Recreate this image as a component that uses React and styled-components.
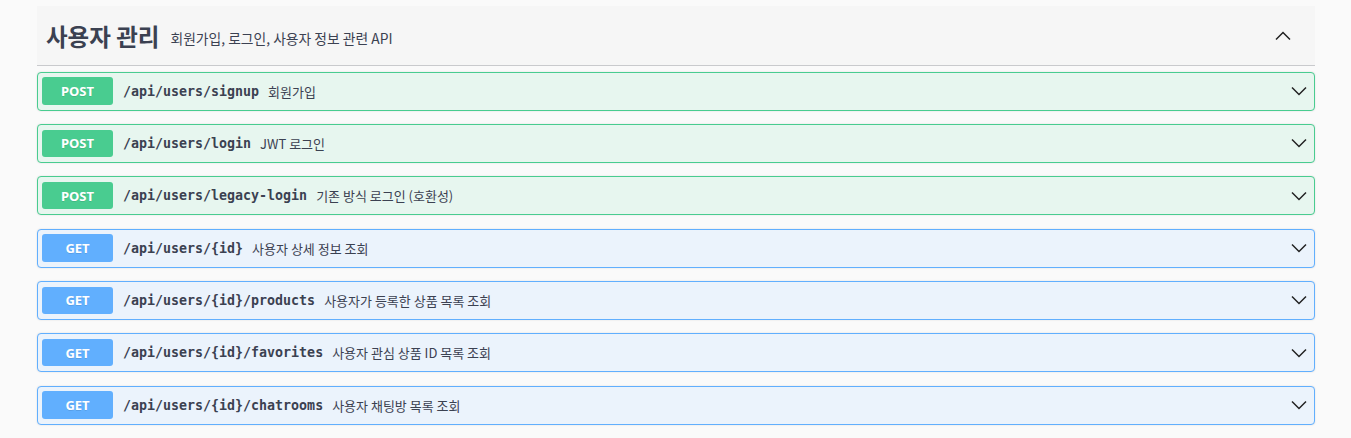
import React from "react";
import styled, { createGlobalStyle } from "styled-components";

const Global = createGlobalStyle`
  html, body { margin: 0; padding: 0; background: #fafafa; }
  body { font-family: "Noto Sans CJK KR", "Noto Sans", sans-serif; color: #3b4151; }
`;

const Page = styled.div`
  padding: 6px 36px 0 37px;
`;

const TagHeader = styled.div`
  display: flex;
  align-items: center;
  height: 60px;
  box-sizing: border-box;
  padding: 0 24px 0 9px;
  background: #f6f6f6;
  border-bottom: 1px solid #c9cacd;
`;

const TagTitle = styled.h3`
  margin: 0 11px 0 0;
  font-family: "Noto Sans CJK KR", sans-serif;
  font-size: 23.5px;
  font-weight: 700;
  color: #3b4151;
  line-height: 1;
  position: relative;
  top: 1px;
`;

const TagDesc = styled.small`
  flex: 1;
  font-family: "Noto Sans CJK KR", sans-serif;
  font-size: 13.8px;
  color: #3b4151;
  position: relative;
  top: 2px;
`;

const List = styled.div`
  padding-top: 5.5px;
`;

const themes = {
  POST: { border: "#49cc90", bg: "#e7f6ef", badge: "#49cc90" },
  GET: { border: "#61affe", bg: "#ebf3fc", badge: "#61affe" },
};

const Opblock = styled.div`
  display: flex;
  align-items: center;
  height: 39px;
  box-sizing: border-box;
  margin-bottom: 13.35px;
  padding: 0 7px 0 4px;
  border: 1px solid ${(p) => themes[p.$method].border};
  border-radius: 4px;
  background: ${(p) => themes[p.$method].bg};
  box-shadow: 0 0 2px rgba(0, 0, 0, 0.12);
`;

const Method = styled.span`
  display: flex;
  align-items: center;
  justify-content: center;
  width: 71px;
  height: 27.5px;
  flex-shrink: 0;
  border-radius: 3px;
  background: ${(p) => themes[p.$method].badge};
  color: #fff;
  font-family: "Noto Sans", sans-serif;
  font-size: 13px;
  font-weight: 700;
  text-shadow: 0 1px 0 rgba(0, 0, 0, 0.1);
`;

const Path = styled.span`
  margin-left: 10px;
  font-family: "DejaVu Sans Mono", monospace;
  font-size: 13.3px;
  font-weight: 700;
  color: #3b4151;
`;

const Desc = styled.span`
  flex: 1;
  margin-left: 9px;
  font-family: "Noto Sans CJK KR", sans-serif;
  font-size: 13px;
  color: #3b4151;
`;

const Chevron = ({ up }) => (
  <svg width="16" height="10" viewBox="0 0 16 10" fill="none">
    <polyline
      points={up ? "1,8.5 8,1.5 15,8.5" : "1,1.5 8,8.5 15,1.5"}
      stroke="#222"
      strokeWidth="1.5"
    />
  </svg>
);

const ops = [
  ["POST", "/api/users/signup", "회원가입"],
  ["POST", "/api/users/login", "JWT 로그인"],
  ["POST", "/api/users/legacy-login", "기존 방식 로그인 (호환성)"],
  ["GET", "/api/users/{id}", "사용자 상세 정보 조회"],
  ["GET", "/api/users/{id}/products", "사용자가 등록한 상품 목록 조회"],
  ["GET", "/api/users/{id}/favorites", "사용자 관심 상품 ID 목록 조회"],
  ["GET", "/api/users/{id}/chatrooms", "사용자 채팅방 목록 조회"],
];

export default function App() {
  return (
    <>
      <Global />
      <Page>
        <TagHeader>
          <TagTitle>사용자 관리</TagTitle>
          <TagDesc>회원가입, 로그인, 사용자 정보 관련 API</TagDesc>
          <Chevron up />
        </TagHeader>
        <List>
          {ops.map(([m, p, d]) => (
            <Opblock key={p} $method={m}>
              <Method $method={m}>{m}</Method>
              <Path>{p}</Path>
              <Desc>{d}</Desc>
              <Chevron />
            </Opblock>
          ))}
        </List>
      </Page>
    </>
  );
}
